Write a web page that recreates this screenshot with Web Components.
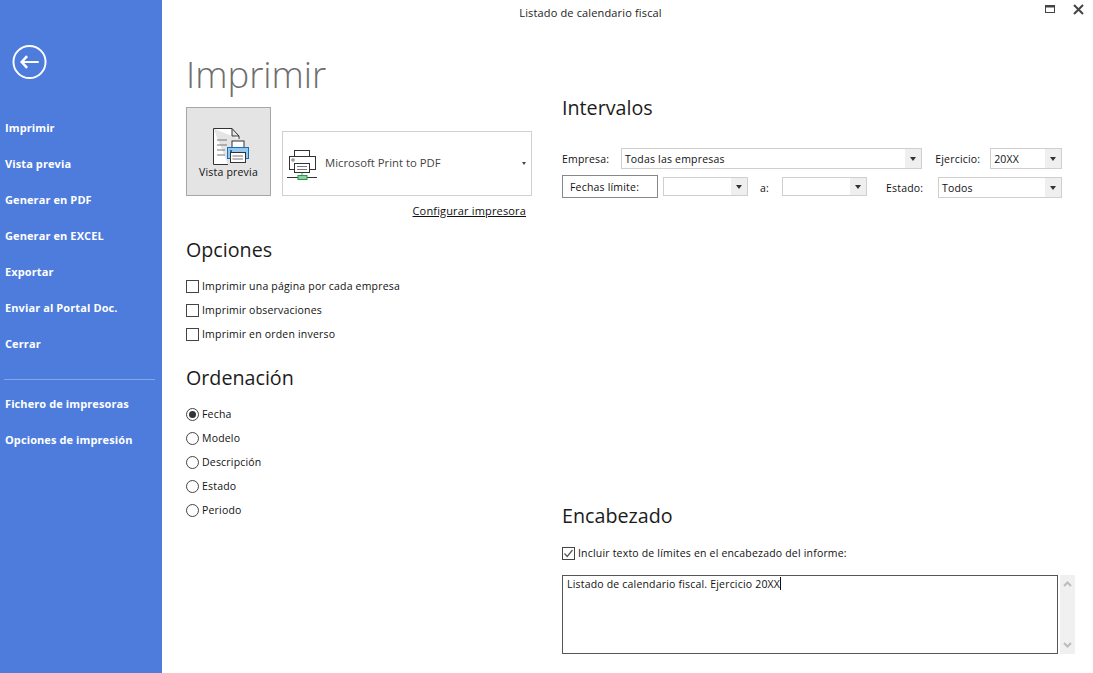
<!DOCTYPE html>
<html lang="es">
<head>
<meta charset="utf-8">
<title>Listado de calendario fiscal</title>
<style>
html, body { margin: 0; height: 100%; background: #fff; }
body { font-family: "Open Sans", "Noto Sans", sans-serif; font-size: 10.5px; letter-spacing: .19px; color: #111; overflow: hidden; }
</style>
</head>
<body>
<print-window></print-window>

<script>
class NavItem extends HTMLElement {
  constructor() {
    super();
    this.attachShadow({ mode: "open" }).innerHTML = `
<style>
:host { display: flex; align-items: center; height: 36px; padding-left: 5px; color: #fff; font-weight: 700; font-size: 11px; letter-spacing: .1px; white-space: nowrap; }
</style>
<slot></slot>`;
  }
}
customElements.define("nav-item", NavItem);

class SideBar extends HTMLElement {
  constructor() {
    super();
    this.attachShadow({ mode: "open" }).innerHTML = `
<style>
:host { display: block; background: #4d7cdd; height: 673px; box-sizing: border-box; }
.back { display: block; margin: 45px 0 0 12px; height: 35px; }
nav { margin-top: 29px; }
hr { border: 0; border-top: 1px solid #86a5e8; margin: 18px 7px 5px 4px; }
</style>
<svg class="back" width="36" height="36" viewBox="0 0 36 36">
  <circle cx="17.5" cy="17.5" r="16.5" fill="none" stroke="#fff" stroke-width="2"/>
  <path d="M9.5 17.5H27" fill="none" stroke="#fff" stroke-width="2"/>
  <path d="M15 11.5L9.5 17.5L15 23.5" fill="none" stroke="#fff" stroke-width="2.6"/>
</svg>
<nav>
  <nav-item>Imprimir</nav-item>
  <nav-item>Vista previa</nav-item>
  <nav-item>Generar en PDF</nav-item>
  <nav-item>Generar en EXCEL</nav-item>
  <nav-item>Exportar</nav-item>
  <nav-item>Enviar al Portal Doc.</nav-item>
  <nav-item>Cerrar</nav-item>
  <hr>
  <nav-item>Fichero de impresoras</nav-item>
  <nav-item>Opciones de impresión</nav-item>
</nav>`;
  }
}
customElements.define("side-bar", SideBar);

class TitleBar extends HTMLElement {
  constructor() {
    super();
    this.attachShadow({ mode: "open" }).innerHTML = `
<style>
:host { display: grid; grid-template-columns: 1fr auto 1fr; align-items: center; height: 26px; font-size: 11px; letter-spacing: .15px; color: #222; }
.title { grid-column: 2; padding-right: 74px; margin-top: -2px; }
.btns { grid-column: 3; justify-self: end; display: flex; align-items: center; gap: 18px; padding: 0 9px 8px 0; }
svg { display: block; }
</style>
<span class="title"><slot></slot></span>
<div class="btns">
  <svg width="10" height="10" viewBox="0 0 10 10"><rect x=".5" y="1.5" width="9" height="7" fill="none" stroke="#444"/><rect x="0" y="1" width="10" height="2.5" fill="#444"/></svg>
  <svg width="11" height="11" viewBox="0 0 11 11"><path d="M1 1L10 10M10 1L1 10" stroke="#444" stroke-width="2"/></svg>
</div>`;
  }
}
customElements.define("title-bar", TitleBar);

class SectionHead extends HTMLElement {
  constructor() {
    super();
    this.attachShadow({ mode: "open" }).innerHTML = `
<style>
:host { display: block; font-size: 19.7px; letter-spacing: 0; line-height: 28px; color: #1c1c1c; font-weight: 400; }
</style>
<slot></slot>`;
  }
}
customElements.define("section-head", SectionHead);

class CheckItem extends HTMLElement {
  constructor() {
    super();
    const radio = this.hasAttribute("radio");
    const on = this.hasAttribute("checked");
    let mark = "";
    if (radio) {
      mark = `<circle cx="6.5" cy="6.5" r="6" fill="#fff" stroke="#444"/>` + (on ? `<circle cx="6.5" cy="6.5" r="3.5" fill="#333"/>` : "");
    } else {
      mark = `<rect x=".5" y=".5" width="12" height="12" fill="#fff" stroke="#444"/>` + (on ? `<path d="M2.5 6.5L5.2 9.5L10.5 3" fill="none" stroke="#555" stroke-width="1.2"/>` : "");
    }
    this.attachShadow({ mode: "open" }).innerHTML = `
<style>
:host { display: flex; align-items: center; gap: 3px; height: 24px; white-space: nowrap; }
svg { display: block; flex: none; }
</style>
<svg width="13" height="13" viewBox="0 0 13 13">${mark}</svg>
<span><slot></slot></span>`;
  }
}
customElements.define("check-item", CheckItem);

class ComboBox extends HTMLElement {
  constructor() {
    super();
    this.attachShadow({ mode: "open" }).innerHTML = `
<style>
:host { display: flex; box-sizing: border-box; height: 21px; border: 1px solid #cfcfcf; background: #fff; align-items: stretch; }
.val { flex: 1; display: flex; align-items: center; padding-left: 3px; white-space: nowrap; overflow: hidden; color: #111; }
.arr { flex: none; width: 16px; background: #efefef; display: flex; align-items: center; justify-content: center; }
.arr i { border: 3px solid transparent; border-top: 4px solid #333; border-bottom: 0; }
</style>
<div class="val"><slot></slot></div>
<div class="arr"><i></i></div>`;
  }
}
customElements.define("combo-box", ComboBox);

class PreviewButton extends HTMLElement {
  constructor() {
    super();
    this.attachShadow({ mode: "open" }).innerHTML = `
<style>
:host { display: flex; flex-direction: column; align-items: center; box-sizing: border-box; width: 85px; height: 89px; background: #e4e4e4; border: 1px solid #a6a6a6; padding-top: 19px; font-size: 10.5px; color: #111; }
svg { display: block; margin-left: 4px; }
span { margin-top: 0; }
</style>
<svg width="38" height="38" viewBox="0 0 38 38">
  <path d="M1.5 1.5H20L27 9V12M20 1.5V9H27M16 37.5H1.5V1.5" fill="#fff" stroke="#333"/>
  <path d="M5 13H15M5 18H15M5 23H13M5 28H13" stroke="#777" stroke-width="1.2"/>
  <rect x="20" y="14" width="12" height="7" fill="#fff" stroke="#333"/>
  <rect x="15.5" y="20.5" width="21" height="11" fill="#93c8f1" stroke="#1b6fb5"/>
  <rect x="18.5" y="25.5" width="15" height="10" fill="#fff" stroke="#333"/>
  <path d="M20.5 29H31M20.5 32H31" stroke="#777"/>
  <rect x="18" y="23" width="2" height="2" fill="#1b6fb5"/>
</svg>
<span><slot></slot></span>`;
  }
}
customElements.define("preview-button", PreviewButton);

class PrinterSelect extends HTMLElement {
  constructor() {
    super();
    this.attachShadow({ mode: "open" }).innerHTML = `
<style>
:host { display: flex; align-items: center; box-sizing: border-box; width: 250px; height: 65px; border: 1px solid #d0d0d0; background: #fff; padding: 0 5px 0 4px; color: #444; font-size: 11.3px; letter-spacing: 0; }
svg { display: block; flex: none; margin-top: 2px; }
.name { flex: 1; padding-left: 7px; margin-top: -2px; }
i { border: 2.5px solid transparent; border-top: 3px solid #444; border-bottom: 0; }
</style>
<svg width="31" height="32" viewBox="0 0 31 32">
  <rect x="7.5" y="1.5" width="15" height="6" fill="#fff" stroke="#333"/>
  <rect x="2.5" y="7.5" width="26" height="13" fill="#fff" stroke="#333"/>
  <rect x="5" y="10" width="2" height="2" fill="none" stroke="#666" stroke-width=".8"/>
  <rect x="7.5" y="14.5" width="15" height="9" fill="#fff" stroke="#333"/>
  <path d="M10 17.5H20M10 20.5H20" stroke="#777"/>
  <path d="M15 24V28" stroke="#888"/>
  <path d="M0 28.5H30" stroke="#333"/>
  <rect x="11" y="26.5" width="9" height="4" fill="#8fd19e" stroke="#1f9b4b"/>
</svg>
<span class="name"><slot></slot></span>
<i></i>`;
  }
}
customElements.define("printer-select", PrinterSelect);

class HeaderBox extends HTMLElement {
  constructor() {
    super();
    this.attachShadow({ mode: "open" }).innerHTML = `
<style>
:host { display: flex; gap: 2px; height: 79px; }
.box { box-sizing: border-box; width: 496px; border: 1px solid #555; padding: 1px 4px; line-height: 15px; color: #111; }
.caret { display: inline-block; width: 1px; height: 13px; background: #111; vertical-align: -2px; }
.bar { width: 15px; background: #f0f0f0; display: flex; flex-direction: column; justify-content: space-between; align-items: center; padding: 6px 0; box-sizing: border-box; }
svg { display: block; }
</style>
<div class="box"><slot></slot><span class="caret"></span></div>
<div class="bar">
  <svg width="9" height="6" viewBox="0 0 9 6"><path d="M1 5L4.5 1.5L8 5" fill="none" stroke="#bcbcbc" stroke-width="2"/></svg>
  <svg width="9" height="6" viewBox="0 0 9 6"><path d="M1 1L4.5 4.5L8 1" fill="none" stroke="#bcbcbc" stroke-width="2"/></svg>
</div>`;
  }
}
customElements.define("header-box", HeaderBox);

class LeftPane extends HTMLElement {
  constructor() {
    super();
    this.attachShadow({ mode: "open" }).innerHTML = `
<style>
:host { display: block; }
h1 { margin: -1px 0 0; font-size: 36.5px; line-height: 46px; letter-spacing: 0; font-weight: 300; color: #6e6e6e; height: 56px; }
.top { display: flex; align-items: flex-end; gap: 11px; width: 346px; }
.link { width: 340px; text-align: right; margin-top: 8px; line-height: 14px; font-size: 11px; letter-spacing: .16px; text-decoration: underline; color: #111; }
section-head.o1 { margin-top: 18px; }
.list1 { margin-top: 10px; }
section-head.o2 { margin-top: 18px; }
.list2 { margin-top: 10px; }
</style>
<h1>Imprimir</h1>
<div class="top">
  <preview-button>Vista previa</preview-button>
  <printer-select>Microsoft Print to PDF</printer-select>
</div>
<div class="link">Configurar impresora</div>
<section-head class="o1">Opciones</section-head>
<div class="list1">
  <check-item>Imprimir una página por cada empresa</check-item>
  <check-item>Imprimir observaciones</check-item>
  <check-item>Imprimir en orden inverso</check-item>
</div>
<section-head class="o2">Ordenación</section-head>
<div class="list2">
  <check-item radio checked>Fecha</check-item>
  <check-item radio>Modelo</check-item>
  <check-item radio>Descripción</check-item>
  <check-item radio>Estado</check-item>
  <check-item radio>Periodo</check-item>
</div>`;
  }
}
customElements.define("left-pane", LeftPane);

class RightPane extends HTMLElement {
  constructor() {
    super();
    this.attachShadow({ mode: "open" }).innerHTML = `
<style>
:host { display: block; padding-top: 42px; }
.rows { margin-top: 26px; display: flex; flex-direction: column; gap: 8px; width: 500px; }
.row { display: flex; align-items: center; height: 21px; white-space: nowrap; }
.l-emp { width: 59px; }
.c-emp { width: 302px; }
.l-eje { margin-left: 13px; width: 55px; }
.c-eje { width: 72px; }
.fechas { box-sizing: border-box; width: 96px; height: 23px; border: 1px solid #888; display: flex; align-items: center; padding-left: 7px; margin: -2px 5px 0 0; align-self: flex-start; }
.c-f { width: 85px; height: 19px; align-self: flex-start; }
.l-a { width: 34px; padding-left: 12px; box-sizing: border-box; }
.l-est { margin-left: 19px; width: 52px; }
.c-est { width: 124px; }
.enc { margin-top: 304px; }
check-item { margin-top: 11px; }
header-box { margin-top: 10px; }
</style>
<section-head>Intervalos</section-head>
<div class="rows">
  <div class="row">
    <span class="l-emp">Empresa:</span>
    <combo-box class="c-emp">Todas las empresas</combo-box>
    <span class="l-eje">Ejercicio:</span>
    <combo-box class="c-eje">20XX</combo-box>
  </div>
  <div class="row">
    <span class="fechas">Fechas límite:</span>
    <combo-box class="c-f"></combo-box>
    <span class="l-a">a:</span>
    <combo-box class="c-f"></combo-box>
    <span class="l-est">Estado:</span>
    <combo-box class="c-est">Todos</combo-box>
  </div>
</div>
<section-head class="enc">Encabezado</section-head>
<check-item checked>Incluir texto de límites en el encabezado del informe:</check-item>
<header-box>Listado de calendario fiscal. Ejercicio 20XX</header-box>`;
  }
}
customElements.define("right-pane", RightPane);

class PrintWindow extends HTMLElement {
  constructor() {
    super();
    this.attachShadow({ mode: "open" }).innerHTML = `
<style>
:host { display: grid; grid-template-columns: 162px 1fr; height: 673px; overflow: hidden; }
.main { display: flex; flex-direction: column; }
.cols { display: grid; grid-template-columns: 376px 1fr; padding: 26px 0 0 24px; }
</style>
<side-bar></side-bar>
<div class="main">
  <title-bar>Listado de calendario fiscal</title-bar>
  <div class="cols">
    <left-pane></left-pane>
    <right-pane></right-pane>
  </div>
</div>`;
  }
}
customElements.define("print-window", PrintWindow);
</script>
</body>
</html>
